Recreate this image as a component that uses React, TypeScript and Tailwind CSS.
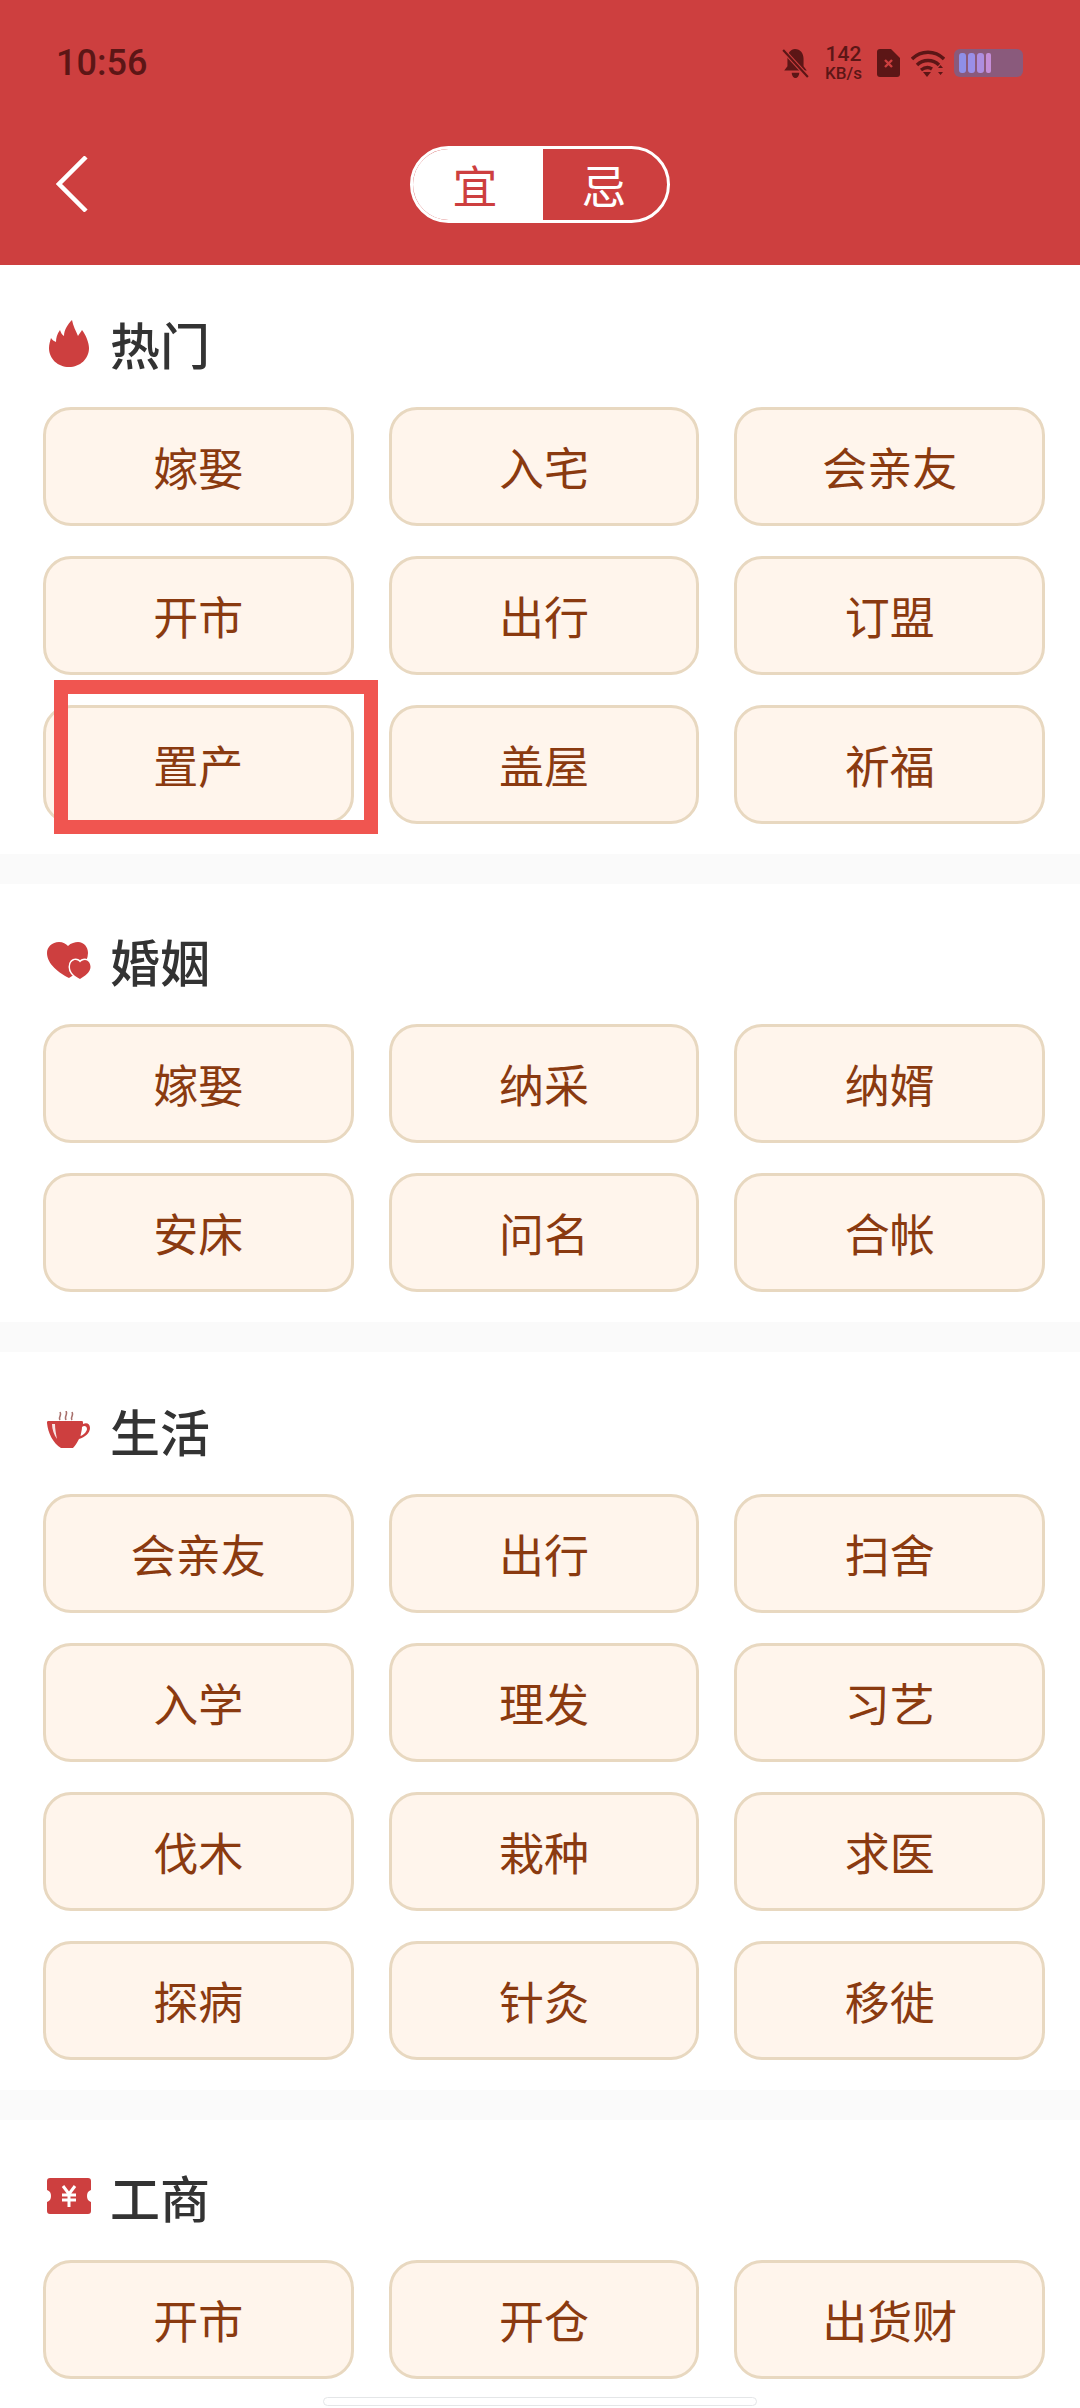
import { ReactNode } from "react";

const FONT = "font-['Noto_Sans_CJK_SC','Noto_Sans',sans-serif]";

function Flame() {
  return (
    <svg viewBox="0 0 40 47" className="w-[40px] h-[47px]">
      <path
        fill="#cd3f3f"
        d="M23 0C24 6 27 11 29 16C30 14 32 12 33 10C37 15 40 23 40 28C40 39 31 47 20 47C9 47 0 39 0 28C0 25 1 21 2 18C3 20 5 21 7 22C7 18 8 14 11 10C12 13 13 15 15 16C15 10 19 4 23 0z"
      />
    </svg>
  );
}

function Hearts() {
  return (
    <svg viewBox="0 0 44 38" className="w-[44px] h-[38px] mt-[2px]">
      <path
        fill="#cd3f3f"
        d="M12 0C16 0 19 2 21 4C24 1 28 0 31 0C37 0 41 5 41 11C41 22 30 31 22 36C12 31 0 22 0 11C0 5 5 0 12 0z"
      />
      <path
        fill="#cd3f3f"
        stroke="#ffffff"
        strokeWidth="3"
        paintOrder="stroke"
        d="M33 37C27 34 23 30 23 25C23 20 26 18 28.500 18C30.500 18 32 19 33 20.500C34 19 36 18 38 18C41 18 43.500 21 43.500 25C43.500 30 38 34 33 37z"
      />
    </svg>
  );
}

function Cup() {
  return (
    <svg viewBox="0 0 44 38" className="w-[44px] h-[38px]">
      <path d="M13 9c-2-3 2-4 0-8M19 9c-2-4 2-5 0-9M25 9c-2-3 2-4 0-8" fill="none" stroke="#a8706c" strokeWidth="1.6" />
      <path
        fill="#cd3f3f"
        fillRule="evenodd"
        d="M1 10H35C36 10 36 11 36 13C40 11 43 13 43 17C43 22 38 26 32 28C30 32 28 35 26 37H14C6 32 1 22 0 12C0 11 0 10 1 10zM35 16C35 19 34 22 33.500 25C37 24 40 20 40 18C40 15 37 14 35 16z"
      />
      <path d="M5 13c0 5 2 11 5 15-1-5-2-10-2-15z" fill="#fff" opacity=".85" />
    </svg>
  );
}

function Ticket() {
  return (
    <svg viewBox="0 0 44 36" className="w-[44px] h-[36px]">
      <path
        fill="#cd3f3f"
        d="M3 0h38c2 0 3 1 3 3v9c-3 1-4 3-4 6s1 5 4 6v9c0 2-1 3-3 3H3c-2 0-3-1-3-3v-9c3-1 4-3 4-6s-1-5-4-6V3c0-2 1-3 3-3z"
      />
      <path d="M16 8l6 8 6-8M15 17h14M15 22h14M22 16v13" fill="none" stroke="#fff" strokeWidth="3" />
    </svg>
  );
}

function StatusIcons() {
  return (
    <div className="flex items-center">
      {/* muted bell */}
      <svg viewBox="0 0 25 27" className="w-[27px] h-[29px]">
        <path fill="#5c1616" d="M12 0c5 0 8 4 8 9v7l3 4H2l3-4V9c0-5 3-9 7-9zM9 22h7c0 3-2 5-3.500 5S9 25 9 22z" />
        <path d="M1 1l23 25" stroke="#cd3f3f" strokeWidth="4" />
        <path d="M1 1l23 25" stroke="#5c1616" strokeWidth="2" />
      </svg>
      <div className="ml-[15px] w-[39px] flex flex-col items-center font-['Roboto',sans-serif] font-medium text-[#5c1616]">
        <span className="text-[21px] leading-[20px]">142</span>
        <span className="text-[17px] leading-[17px] mt-[1px]">KB/s</span>
      </div>
      <svg viewBox="0 0 23 28" className="ml-[14px] w-[23px] h-[28px]">
        <path fill="#5c1616" d="M3 0h11l9 9v16c0 2-1 3-3 3H3c-2 0-3-1-3-3V3c0-2 1-3 3-3z" />
        <path d="M8 11l7 7M15 11l-7 7" stroke="#cd3f3f" strokeWidth="2.4" />
      </svg>
      <svg viewBox="0 0 34 27" className="ml-[11px] w-[34px] h-[27px]" fill="none" stroke="#5c1616" strokeWidth="3.400">
        <path d="M1 9c9-9 23-9 32 0" />
        <path d="M6 15c6-6 16-6 22 0" />
        <path d="M10 20c4-3 8-3 11-1" />
        <path d="M12 22l4 5 4-5z" fill="#5c1616" stroke="none" />
        <path d="M27 18l2.500-3 2.500 3zM27 22l2.500 3 2.500-3z" fill="#5c1616" stroke="none" />
      </svg>
      {/* battery */}
      <div className="ml-[9px] w-[69px] h-[28px] rounded-[6px] bg-[#8a5a7c] flex items-center gap-[2px] pl-[5px]">
        <span className="w-[7px] h-[20px] rounded-[3px] bg-[#8f8fe8]" />
        <span className="w-[7px] h-[20px] rounded-[3px] bg-[#9a8fe8]" />
        <span className="w-[7px] h-[20px] rounded-[3px] bg-[#ae8ee0]" />
        <span className="w-[5px] h-[20px] rounded-[2px] bg-[#c58ed8]" />
      </div>
    </div>
  );
}

function Section({
  icon,
  title,
  items,
  top,
}: {
  icon: ReactNode;
  title: string;
  items: string[];
  top: string;
}) {
  return (
    <section className={`pl-[43px] pr-[35px] pb-[30px] bg-white ${top}`}>
      <div className="h-[62px] flex items-center mb-[33px]">
        <div className="w-[44px] flex justify-center ml-[4px]">{icon}</div>
        <h2 className="ml-[19px] text-[50px] leading-[62px] font-medium text-[#333333]">{title}</h2>
      </div>
      <div className="grid grid-cols-3 gap-x-[35px] gap-y-[30px]">
        {items.map((t, i) => (
          <div
            key={i}
            className="h-[119px] rounded-[28px] border-[3px] border-[#e8d8c0] bg-[#fff5ec] flex items-center justify-center text-[45px] text-[#8a3a10]"
          >
            {t}
          </div>
        ))}
      </div>
    </section>
  );
}

export default function App() {
  return (
    <div className={`relative w-[1080px] h-[2408px] overflow-hidden bg-white ${FONT}`}>
      <header className="h-[265px] bg-[#cd3f3f]">
        <div className="h-[126px] pl-[56px] pr-[57px] flex items-center justify-between">
          <span className="font-['Roboto',sans-serif] font-medium text-[36px] text-[#5c1616]">10:56</span>
          <StatusIcons />
        </div>
        <div className="relative h-[77px] mt-[20px] flex justify-center">
          <svg viewBox="0 0 32 56" className="absolute left-[56px] top-[10px] w-[32px] h-[56px]" fill="none" stroke="#ffffff" strokeWidth="4.500">
            <path d="M30 1L3 28l27 27" />
          </svg>
          <div className="w-[260px] h-[77px] rounded-full border-[3px] border-white flex overflow-hidden text-[45px]">
            <div className="w-[130px] pr-[6px] bg-white text-[#cd3f3f] flex items-center justify-center">宜</div>
            <div className="flex-1 pr-[2px] text-white flex items-center justify-center">忌</div>
          </div>
        </div>
      </header>

      <Section
        top="pt-[47px]"
        icon={<Flame />}
        title="热门"
        items={["嫁娶", "入宅", "会亲友", "开市", "出行", "订盟", "置产", "盖屋", "祈福"]}
      />
      <div className="h-[30px] bg-[#fafafa]" />
      <Section
        top="pt-[45px]"
        icon={<Hearts />}
        title="婚姻"
        items={["嫁娶", "纳采", "纳婿", "安床", "问名", "合帐"]}
      />
      <div className="h-[30px] bg-[#fafafa]" />
      <Section
        top="pt-[47px]"
        icon={<Cup />}
        title="生活"
        items={["会亲友", "出行", "扫舍", "入学", "理发", "习艺", "伐木", "栽种", "求医", "探病", "针灸", "移徙"]}
      />
      <div className="h-[30px] bg-[#fafafa]" />
      <Section
        top="pt-[45px]"
        icon={<Ticket />}
        title="工商"
        items={["开市", "开仓", "出货财"]}
      />

      {/* annotation box over the 置产 button */}
      <div className="absolute left-[54px] top-[680px] w-[324px] h-[154px] border-[14px] border-[#f05550]" />
      {/* home indicator */}
      <div className="absolute left-[323px] top-[2397px] w-[434px] h-[9px] rounded-full bg-white border border-[#e4e6e8]" />
    </div>
  );
}
